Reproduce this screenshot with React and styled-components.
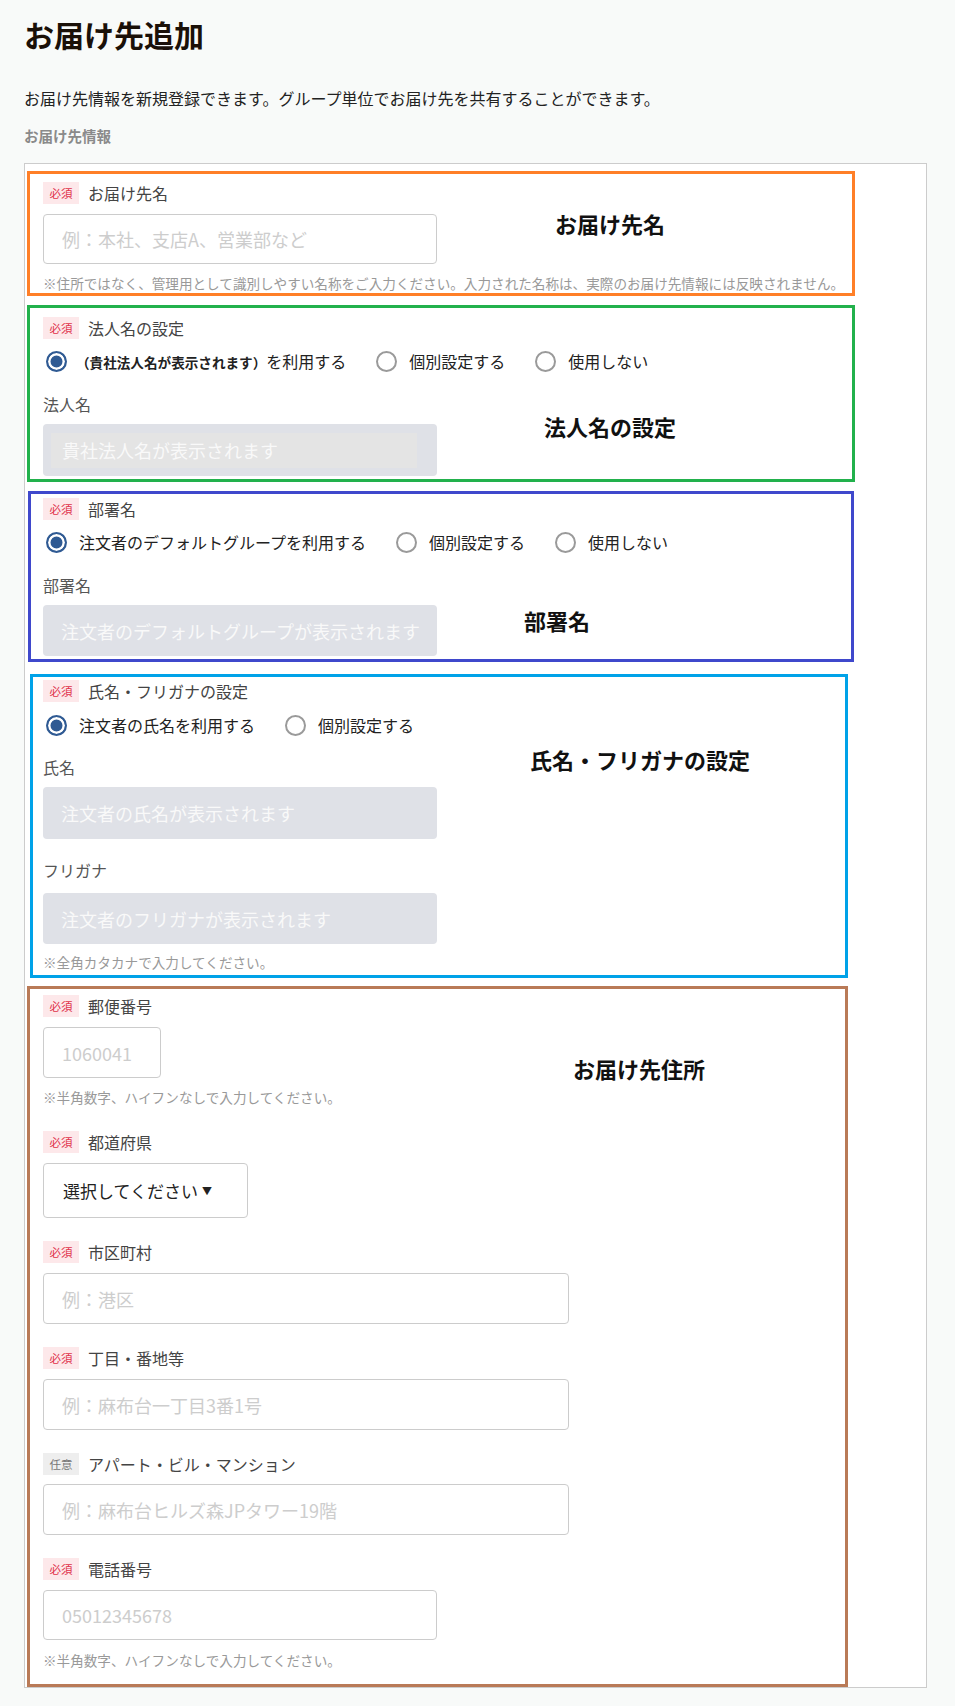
import React from 'react';
import styled, { createGlobalStyle } from 'styled-components';

const GlobalStyle = createGlobalStyle`
  body {
    margin: 0;
    background: #f8faf9;
    font-family: "Noto Sans CJK JP", "Noto Sans", sans-serif;
    color: #222;
  }
`;

const App = () => {
  return (
    <>
      <GlobalStyle />
      <Page>
        <Title>お届け先追加</Title>
        <Lead>お届け先情報を新規登録できます。グループ単位でお届け先を共有することができます。</Lead>
        <SectionTitle>お届け先情報</SectionTitle>
        <Panel>
          <Box $color="#ff7f27" $w={828} $ml={2} $pt={8} $pb={1}>
            <Note $left={525} $top={34}>お届け先名</Note>
            <FieldHead>
              <Badge>必須</Badge>
              <Label>お届け先名</Label>
            </FieldHead>
            <TextInput $w={394} placeholder="例：本社、支店A、営業部など" />
            <Hint>※住所ではなく、管理用として識別しやすい名称をご入力ください。入力された名称は、実際のお届け先情報には反映されません。</Hint>
          </Box>

          <Box $color="#22b14c" $w={828} $ml={2} $pt={9} $pb={3} $mt={9}>
            <Note $left={514} $top={103}>法人名の設定</Note>
            <FieldHead>
              <Badge>必須</Badge>
              <Label>法人名の設定</Label>
            </FieldHead>
            <RadioRow>
              <RadioItem $gap={9}>
                <Radio $checked />
                <RadioText>
                  <Strong>（貴社法人名が表示されます）</Strong>を利用する
                </RadioText>
              </RadioItem>
              <RadioItem>
                <Radio />
                <RadioText>個別設定する</RadioText>
              </RadioItem>
              <RadioItem>
                <Radio />
                <RadioText>使用しない</RadioText>
              </RadioItem>
            </RadioRow>
            <SubLabel>法人名</SubLabel>
            <Disabled $h={52}>
              <Nested>貴社法人名が表示されます</Nested>
            </Disabled>
          </Box>

          <Box $color="#3f48cc" $w={826} $ml={3} $pt={4} $pb={3} $mt={9}>
            <Note $left={493} $top={111}>部署名</Note>
            <FieldHead>
              <Badge>必須</Badge>
              <Label>部署名</Label>
            </FieldHead>
            <RadioRow>
              <RadioItem>
                <Radio $checked />
                <RadioText>注文者のデフォルトグループを利用する</RadioText>
              </RadioItem>
              <RadioItem>
                <Radio />
                <RadioText>個別設定する</RadioText>
              </RadioItem>
              <RadioItem>
                <Radio />
                <RadioText>使用しない</RadioText>
              </RadioItem>
            </RadioRow>
            <SubLabel>部署名</SubLabel>
            <Disabled>注文者のデフォルトグループが表示されます</Disabled>
          </Box>

          <Box $color="#00a2e8" $w={818} $ml={5} $pt={3} $pb={4} $mt={12}>
            <Note $left={497} $top={67}>氏名・フリガナの設定</Note>
            <FieldHead>
              <Badge>必須</Badge>
              <Label>氏名・フリガナの設定</Label>
            </FieldHead>
            <RadioRow $mt={11}>
              <RadioItem>
                <Radio $checked />
                <RadioText>注文者の氏名を利用する</RadioText>
              </RadioItem>
              <RadioItem>
                <Radio />
                <RadioText>個別設定する</RadioText>
              </RadioItem>
            </RadioRow>
            <SubLabel $mt={19}>氏名</SubLabel>
            <Disabled $h={52}>注文者の氏名が表示されます</Disabled>
            <SubLabel $mt={20} $mb={12}>フリガナ</SubLabel>
            <Disabled>注文者のフリガナが表示されます</Disabled>
            <Hint $mt={9}>※全角カタカナで入力してください。</Hint>
          </Box>

          <Box $color="#b97a57" $w={821} $ml={2} $pt={6} $pb={15} $mt={8}>
            <Note $left={543} $top={64}>お届け先住所</Note>
            <FieldHead>
              <Badge>必須</Badge>
              <Label>郵便番号</Label>
            </FieldHead>
            <TextInput $w={118} $h={51} placeholder="1060041" />
            <Hint>※半角数字、ハイフンなしで入力してください。</Hint>

            <Field $mt={25}>
              <FieldHead>
                <Badge>必須</Badge>
                <Label>都道府県</Label>
              </FieldHead>
              <Select>選択してください<Caret>▼</Caret></Select>
            </Field>

            <Field>
              <FieldHead>
                <Badge>必須</Badge>
                <Label>市区町村</Label>
              </FieldHead>
              <TextInput $w={526} $h={51} placeholder="例：港区" />
            </Field>

            <Field>
              <FieldHead>
                <Badge>必須</Badge>
                <Label>丁目・番地等</Label>
              </FieldHead>
              <TextInput $w={526} $h={51} placeholder="例：麻布台一丁目3番1号" />
            </Field>

            <Field>
              <FieldHead>
                <Badge $optional>任意</Badge>
                <Label>アパート・ビル・マンション</Label>
              </FieldHead>
              <TextInput $w={526} $h={51} $mt={9} placeholder="例：麻布台ヒルズ森JPタワー19階" />
            </Field>

            <Field>
              <FieldHead>
                <Badge>必須</Badge>
                <Label>電話番号</Label>
              </FieldHead>
              <TextInput $w={394} placeholder="05012345678" />
              <Hint $mt={11}>※半角数字、ハイフンなしで入力してください。</Hint>
            </Field>
          </Box>
        </Panel>
      </Page>
    </>
  );
};

export default App;

const Page = styled.div`
  padding: 14px 28px 17px 24px;
`;

const Title = styled.h1`
  margin: 0;
  font-size: 30px;
  line-height: 40px;
  font-weight: 700;
  color: #1a1008;
`;

const Lead = styled.p`
  margin: 33px 0 0;
  font-size: 16px;
  line-height: 22px;
  color: #222;
`;

const SectionTitle = styled.h2`
  margin: 17px 0 0;
  font-size: 14.5px;
  line-height: 20px;
  font-weight: 700;
  color: #8a8a8a;
`;

const Panel = styled.div`
  width: 901px;
  margin-top: 17px;
  padding-top: 7px;
  border: 1px solid #cccccc;
  background: #ffffff;
  display: flex;
  flex-direction: column;
`;

const Box = styled.section`
  position: relative;
  box-sizing: border-box;
  width: ${p => p.$w}px;
  margin-left: ${p => p.$ml}px;
  margin-top: ${p => p.$mt || 0}px;
  padding: ${p => p.$pt}px 0 ${p => p.$pb}px ${p => 15 - p.$ml}px;
  border: 3px solid ${p => p.$color};
  display: flex;
  flex-direction: column;
  align-items: flex-start;
`;

const Note = styled.div`
  position: absolute;
  left: ${p => p.$left}px;
  top: ${p => p.$top}px;
  font-size: 22px;
  line-height: 31px;
  font-weight: 700;
  color: #111;
  white-space: nowrap;
`;

const Field = styled.div`
  margin-top: ${p => p.$mt || 23}px;
  display: flex;
  flex-direction: column;
  align-items: flex-start;
`;

const FieldHead = styled.div`
  display: flex;
  align-items: center;
  gap: 9px;
  height: 22px;
`;

const Badge = styled.span`
  display: inline-flex;
  align-items: center;
  justify-content: center;
  width: 36px;
  height: 22px;
  font-size: 11.5px;
  background: ${p => (p.$optional ? '#eeeeee' : '#fde8ea')};
  color: ${p => (p.$optional ? '#777777' : '#e0324a')};
`;

const Label = styled.span`
  font-size: 16px;
  line-height: 22px;
  color: #444;
`;

const SubLabel = styled.div`
  margin-top: ${p => p.$mt || 20}px;
  margin-bottom: ${p => p.$mb || 9}px;
  font-size: 16px;
  line-height: 22px;
  color: #555;
`;

const TextInput = styled.input`
  box-sizing: border-box;
  width: ${p => p.$w}px;
  height: ${p => p.$h || 50}px;
  margin: ${p => p.$mt || 10}px 0 0;
  padding: 0 18px;
  border: 1px solid #cccccc;
  border-radius: 4px;
  background: #fff;
  font-family: inherit;
  font-size: 18px;
  color: #222;
  outline: none;
  &::placeholder {
    color: #cdcdcd;
  }
`;

const Disabled = styled.div`
  box-sizing: border-box;
  width: 394px;
  height: ${p => p.$h || 51}px;
  padding: 0 18px;
  display: flex;
  align-items: center;
  border-radius: 4px;
  background: #dfe1e7;
  font-size: 18px;
  color: #f9f9f9;
  white-space: nowrap;
`;

const Nested = styled.div`
  box-sizing: border-box;
  margin-left: -10px;
  width: 366px;
  height: 35px;
  padding-left: 11px;
  display: flex;
  align-items: center;
  background: #e4e4e4;
  color: #f9f9f9;
`;

const Hint = styled.div`
  margin-top: ${p => p.$mt || 10}px;
  font-size: 13.6px;
  line-height: 18px;
  color: #999;
  white-space: nowrap;
`;

const RadioRow = styled.div`
  margin-top: ${p => p.$mt || 10}px;
  margin-left: 3px;
  height: 24px;
  display: flex;
  align-items: center;
  gap: 30px;
`;

const RadioItem = styled.label`
  display: flex;
  align-items: center;
  gap: ${p => p.$gap || 12}px;
`;

const Radio = styled.span`
  box-sizing: border-box;
  width: 21px;
  height: 21px;
  border-radius: 50%;
  border: 2px solid ${p => (p.$checked ? '#2f5a93' : '#9a9a9a')};
  background: ${p => (p.$checked ? '#2f5a93' : '#fff')};
  box-shadow: inset 0 0 0 2.5px #fff;
`;

const RadioText = styled.span`
  font-size: 16px;
  line-height: 22px;
  color: #222;
  white-space: nowrap;
`;

const Strong = styled.span`
  font-size: 13.6px;
  font-weight: 700;
`;

const Select = styled.div`
  box-sizing: border-box;
  margin-top: 10px;
  width: 205px;
  height: 55px;
  padding-left: 19px;
  display: flex;
  align-items: center;
  border: 1px solid #cccccc;
  border-radius: 4px;
  background: #fff;
  font-size: 17px;
  color: #222;
`;

const Caret = styled.span`
  margin-left: 4px;
  font-size: 10px;
`;
